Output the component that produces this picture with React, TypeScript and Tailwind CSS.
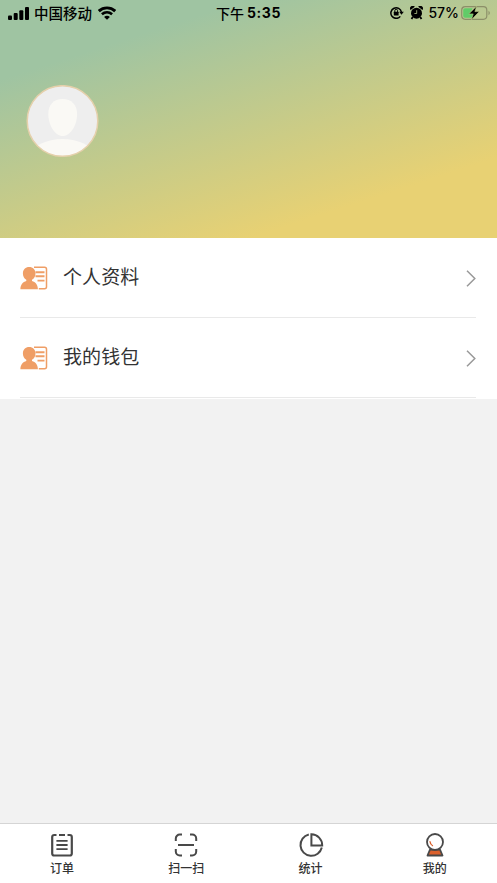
import type { ReactNode } from 'react'

interface TabProps {
  label: string
  children: ReactNode
}

function StatusBar() {
  return (
    <div className="grid h-6 grid-cols-3 items-center text-black">
      <div className="flex h-6 items-center pl-2">
        <svg width="21" height="13" viewBox="0 0 21 13" fill="currentColor">
          <rect x="0" y="8.5" width="4" height="4.5" rx="1" />
          <rect x="5.7" y="6" width="4" height="7" rx="1" />
          <rect x="11.3" y="3.2" width="4" height="9.8" rx="1" />
          <rect x="17" y="0" width="4" height="13" rx="1" />
        </svg>
        <span className="-mt-px ml-[5px] text-[14.5px] leading-6 font-medium whitespace-nowrap">中国移动</span>
        <svg className="-mt-px ml-[6px]" width="18" height="14" viewBox="0 0 18 14" fill="none" stroke="currentColor">
          <path d="M.8 5.1C5.4.8 12.6.8 17.2 5.1" strokeWidth="2.9" />
          <path d="M3.9 8.3C6.9 5.7 11.1 5.7 14.1 8.3" strokeWidth="2.6" />
          <path d="M9 13.8 6.1 10.9C7.8 9.5 10.2 9.5 11.9 10.9Z" fill="currentColor" stroke="none" />
        </svg>
      </div>
      <div className="flex h-6 items-center justify-center gap-[3px] leading-6 whitespace-nowrap">
        <span className="-mt-px text-[14px] font-medium">下午</span>
        <span className="font-[Inter] text-[14px] font-bold tracking-[0.6px]">5:35</span>
      </div>
      <div className="flex h-6 items-center justify-end pr-[6px]">
        <svg className="-mt-px" width="14" height="13" viewBox="0 0 14 13" fill="none" stroke="currentColor">
          <path d="M10.3 10.4A5.3 5.3 0 1 1 11.4 6.1" strokeWidth="1.5" />
          <path d="M9.2 5.8H13.8L11.5 8.8Z" fill="currentColor" stroke="none" />
          <rect x="3.8" y="5.7" width="4.8" height="3.8" rx=".5" fill="currentColor" stroke="none" />
          <path d="M4.8 6V4.7a1.4 1.4 0 0 1 2.8 0V6" strokeWidth="1" />
        </svg>
        <svg className="-mt-px ml-[6px]" width="13" height="14" viewBox="0 0 13 14" fill="currentColor">
          <circle cx="6.5" cy="7.2" r="5.5" />
          <path d="M.6 4A2.4 2.4 0 0 1 4.8.8ZM12.4 4A2.4 2.4 0 0 0 8.2.8Z" />
          <path d="m2.8 11-1.3 2M10.2 11l1.3 2" stroke="currentColor" strokeWidth="1.8" />
          <path d="M6.7 4.2v3.3H4.4" fill="none" stroke="#b8c98e" strokeWidth=".8" />
        </svg>
        <span className="ml-[5px] font-[Inter] text-[14px] leading-6 font-medium">57%</span>
        <svg className="ml-[2px] shrink-0" width="30" height="14" viewBox="0 0 30 14">
          <rect x=".7" y=".7" width="25.1" height="12.6" rx="3.5" fill="none" stroke="#8c8f69" strokeWidth="1.2" />
          <path d="M4 2.2h7.6L9 7.4h3.5l-1.1 4.4H4A1.8 1.8 0 0 1 2.2 10V4A1.8 1.8 0 0 1 4 2.2Z" fill="#61cb68" />
          <path d="M27.5 4.8v4.4c1.8-.7 1.8-3.7 0-4.4Z" fill="#8c8f69" />
          <path d="M15.6.2 7.8 7.9h4.4L10.4 13.8l7.9-8.2h-4.4Z" fill="black" stroke="#c3cc87" strokeWidth=".6" />
        </svg>
      </div>
    </div>
  )
}

function Avatar() {
  return (
    <svg className="mt-[60px] ml-[26px]" width="73" height="73" viewBox="0 0 73 73">
      <defs>
        <clipPath id="avatar">
          <circle cx="36.5" cy="36" r="35.2" />
        </clipPath>
      </defs>
      <circle cx="36.5" cy="36" r="35.2" fill="#eeeeee" />
      <g clipPath="url(#avatar)" fill="#faf9f5">
        <path d="M36.5 14C27.5 14 22.3 20 22.3 29c0 11.5 6.8 22 14.4 22s14.4-10.5 14.4-22c0-9-5.6-15-14.6-15Z" />
        <ellipse cx="36.5" cy="69" rx="30" ry="15" />
      </g>
      <circle cx="36.5" cy="36" r="35.3" fill="none" stroke="#e5d0ab" strokeWidth="1.5" />
    </svg>
  )
}

function ProfileIcon() {
  return (
    <svg className="mt-px" width="28" height="24" viewBox="0 0 28 24" fill="none" stroke="#ef9e66">
      <path d="M14 1.2h10.5a2 2 0 0 1 2 2v17.6a2 2 0 0 1-2 2H18.8" strokeWidth="1.5" />
      <path d="M15.5 6.2h9M15.5 10.3h9M17.5 14.6h7" strokeWidth="1.9" />
      <path d="M9.2 1.1c-3.7 0-6.3 2.7-6.3 6.4 0 2.6 1.3 5 3.4 6.3v1.1C2.9 15.7.4 18.8.4 23.2h17.5c0-4.4-2.5-7.5-5.9-8.3v-1.1c2.1-1.3 3.5-3.7 3.5-6.3 0-3.7-2.6-6.4-6.3-6.4Z" fill="#ef9e66" stroke="none" />
    </svg>
  )
}

function MenuRow({ label }: { label: string }) {
  return (
    <div className="mr-[21px] ml-5 flex h-20 items-center border-b border-[#e9e9e9]">
      <ProfileIcon />
      <span className="-mt-[3px] ml-[15px] text-[19px] leading-7 tracking-[0.1px] text-[#333]">{label}</span>
      <svg className="mt-px ml-auto" width="10" height="17" viewBox="0 0 10 17" fill="none" stroke="#999">
        <path d="m1 .8 7.8 7.7L1 16.2" strokeWidth="1.5" />
      </svg>
    </div>
  )
}

function Tab({ label, children }: TabProps) {
  return (
    <button className="flex flex-1 flex-col items-center pt-2">
      <svg width="26" height="26" viewBox="0 0 26 26" fill="none" stroke="#494949" strokeWidth="2">
        {children}
      </svg>
      <span className="mt-px text-[12px] leading-[18px] font-medium text-[#333]">{label}</span>
    </button>
  )
}

export default function App() {
  return (
    <div className="flex h-screen flex-col overflow-hidden bg-[#f2f2f2] font-['Noto_Sans_CJK_SC',sans-serif]">
      <header className="h-[238px] shrink-0 bg-[linear-gradient(162deg,#9fc4a2_20%,#e8d173_80%)] pt-px">
        <StatusBar />
        <Avatar />
      </header>

      <main className="flex-1">
        <div className="bg-white pb-px">
          <MenuRow label="个人资料" />
          <MenuRow label="我的钱包" />
        </div>
      </main>

      <nav className="flex h-[60px] shrink-0 border-t border-[#d5d5d5] bg-white">
        <Tab label="订单">
          <path d="M7.5 3H5.2a2 2 0 0 0-2 2v16.5a2 2 0 0 0 2 2h15.6a2 2 0 0 0 2-2V5a2 2 0 0 0-2-2h-2.3M10 3h6" strokeWidth="2.2" />
          <path d="M7.4 8.9h11.2M7.4 13h11.2M7.4 17.1h11.2" strokeWidth="1.9" />
        </Tab>
        <Tab label="扫一扫">
          <path d="M2.8 9V6.5a4 4 0 0 1 4-4H9M17 2.5h2.2a4 4 0 0 1 4 4V9M23.2 17v2.5a4 4 0 0 1-4 4H17M9 23.5H6.8a4 4 0 0 1-4-4V17M5 13h16" />
        </Tab>
        <Tab label="统计">
          <path d="M10.8 2.5A10.8 10.8 0 1 0 23.8 15.5" />
          <path d="M13.4 2.3v11.2h10.8A11 11 0 0 0 13.4 2.3Z" />
        </Tab>
        <Tab label="我的">
          <path d="M8 17.7h10l2.5 5.8h-15Z" fill="#dc612d" strokeWidth="1.8" strokeLinejoin="round" />
          <circle cx="13" cy="10" r="8" fill="white" strokeWidth="1.8" />
          <path d="M7.9 9.3c.2 2.2 1.2 3.7 3 4.7" stroke="#dc612d" strokeWidth="1.4" />
        </Tab>
      </nav>
    </div>
  )
}
